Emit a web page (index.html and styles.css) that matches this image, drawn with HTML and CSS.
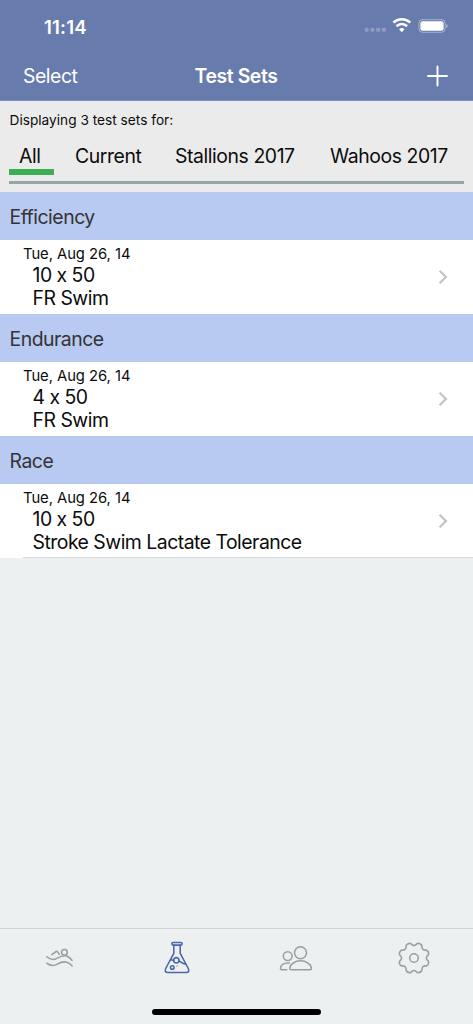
FILE: index.html
```html
<!DOCTYPE html>
<html lang="en">
<head>
<meta charset="utf-8">
<title>Test Sets</title>
<link rel="stylesheet" href="styles.css">
</head>
<body>
<div class="app">
  <header class="top">
    <div class="status">
      <span class="time">11:14</span>
      <svg class="indicators" width="84" height="18" viewBox="0 0 84 18" fill="none">
        <g fill="#fff" opacity=".25"><rect x=".7" y="11.8" width="4" height="4" rx="1.2"/><rect x="6.4" y="11.8" width="4" height="4" rx="1.2"/><rect x="12.2" y="11.8" width="4" height="4" rx="1.2"/><rect x="17.9" y="11.8" width="4" height="4" rx="1.2"/></g>
        <g stroke="#fff" stroke-width="2.6"><path d="M29.4 6.6a12.2 12.2 0 0 1 16.8 0"/><path d="M32.5 10.2a7.6 7.6 0 0 1 10.6 0"/></g>
        <path d="M35.1 13.3a3.9 3.9 0 0 1 5.4 0L37.8 16.2Z" fill="#fff"/>
        <rect x="54.9" y="3.7" width="26.2" height="12.6" rx="3.6" stroke="#fff" stroke-opacity=".42"/>
        <rect x="56.4" y="5.2" width="23.2" height="9.6" rx="2.2" fill="#fff"/>
        <path d="M82.2 8c1.9.8 1.9 3.2 0 4Z" fill="#fff" opacity=".45"/>
      </svg>
    </div>
    <nav class="navbar">
      <span class="select">Select</span>
      <h1 class="title">Test Sets</h1>
      <svg class="plus" width="22" height="22" viewBox="0 0 22 22" stroke="#fff" stroke-width="1.9" stroke-linecap="round"><path d="M11.5 1.5v19M2 11h19"/></svg>
    </nav>
  </header>
  <section class="filter">
    <p class="caption">Displaying 3 test sets for:</p>
    <div class="tabs">
      <span class="tab active">All</span><span class="tab">Current</span><span class="tab stallions">Stallions 2017</span><span class="tab wahoos">Wahoos 2017</span>
    </div>
  </section>
  <main class="list">
    <h2 class="heading">Efficiency</h2>
    <article class="row">
      <div><p class="date">Tue, Aug 26, 14</p><p class="line">10 x 50</p><p class="line">FR Swim</p></div>
      <svg class="chevron" width="10" height="16" viewBox="0 0 10 16"><path d="m1.6 1.8 6.3 6.2-6.3 6.2"/></svg>
    </article>
    <h2 class="heading">Endurance</h2>
    <article class="row">
      <div><p class="date">Tue, Aug 26, 14</p><p class="line">4 x 50</p><p class="line">FR Swim</p></div>
      <svg class="chevron" width="10" height="16" viewBox="0 0 10 16"><path d="m1.6 1.8 6.3 6.2-6.3 6.2"/></svg>
    </article>
    <h2 class="heading">Race</h2>
    <article class="row last">
      <div><p class="date">Tue, Aug 26, 14</p><p class="line">10 x 50</p><p class="line">Stroke Swim Lactate Tolerance</p></div>
      <svg class="chevron" width="10" height="16" viewBox="0 0 10 16"><path d="m1.6 1.8 6.3 6.2-6.3 6.2"/></svg>
    </article>
  </main>
  <footer class="bottom">
    <nav class="tabbar">
      <svg class="icon" width="36" height="36" viewBox="-18 -18 36 36">
        <path d="M-12.2-1.2C-8.7 2-5.2 2.2-1.7.1 2.2-2.2 4.8-3 7.8-1.9 9.8-1.2 11.5.4 13.1 2.4M-12.2 5.2c3.5 2.9 7 3 10.5 1C2.2 4 4.8 3.2 7.8 4.3c2 .7 3.7 1.9 5.3 3.7M-7.2-3.4l4.3-3.1q.9-.5 1.5.4L.3-3.7"/><circle cx="5.4" cy="-5.7" r="2.9"/>
      </svg>
      <svg class="icon selected" width="36" height="36" viewBox="-18 -18 36 36">
        <rect x="-5.2" y="-15.6" width="10.4" height="2.7" rx="1.3"/>
        <path d="M-3.2-12.8v8.2L-11.3 10.5q-1.7 4 2.3 4H9q4 0 2.3-4L3.2-4.6v-8.2M-7 2.4c1.5-.6 2.6-.5 3.8 0M2.2 3c2.4 1.7 4 3.5 7 3.2"/><circle cx="-.7" cy="2.3" r="2.7"/><circle cx="-4.7" cy="9.5" r="1.8"/><circle cx=".3" cy="8.2" r=".1"/>
      </svg>
      <svg class="icon" width="36" height="36" viewBox="-18 -18 36 36">
        <circle cx="4.5" cy="-5.3" r="6"/><circle cx="-8.3" cy="-1.9" r="4.4"/>
        <path d="M-6.2 10.5c0-4.3 5.2-7.7 10.8-7.7s10.8 3.4 10.8 7.7q0 1.2-1.2 1.2H-5q-1.2 0-1.2-1.2ZM-9.3 11.7h-4.9q-1.3 0-1.3-1.2c0-3.3 3.2-5.6 7.1-5.6h1.7"/>
      </svg>
      <svg class="icon" width="36" height="36" viewBox="-18 -18 36 36">
        <path d="M-3.2-14.4Q0-10.4 3.2-14.4Q6-15.4 7.9-12.5Q7.4-7.4 12.5-7.9Q15.4-6 14.4-3.2Q10.4 0 14.4 3.2Q15.4 6 12.5 7.9Q7.4 7.4 7.9 12.5Q6 15.4 3.2 14.4Q0 10.4-3.2 14.4Q-6 15.4-7.9 12.5Q-7.4 7.4-12.5 7.9Q-15.4 6-14.4 3.2Q-10.4 0-14.4-3.2Q-15.4-6-12.5-7.9Q-7.4-7.4-7.9-12.5Q-6-15.4-3.2-14.4Z"/><circle r="4.3"/>
      </svg>
    </nav>
    <div class="home"></div>
  </footer>
</div>
</body>
</html>
```
FILE: styles.css
```css
* { box-sizing: border-box; margin: 0; padding: 0; }
body { font-family: Inter, "Liberation Sans", sans-serif; color: #0c0c0c; background: #ecf0f1; }
svg { display: block; flex: none; }
.app { width: 473px; height: 1024px; display: flex; flex-direction: column; overflow: hidden; white-space: nowrap; }
.top { height: 101px; background: #687bad; color: #fff; border-bottom: 1px solid #8192c0; }
.status { height: 52px; padding: 16px 25px 0 44px; display: flex; justify-content: space-between; }
.time { font-size: 18.6px; line-height: 22px; font-weight: 600; letter-spacing: .2px; }
.navbar { height: 48px; padding: 0 25px 0 23px; display: grid; grid-template-columns: 1fr auto 1fr; align-items: center; }
.select { font-size: 19.4px; letter-spacing: -.45px; }
.title { font-size: 19.4px; font-weight: 600; letter-spacing: -.4px; padding-left: 1px; }
.plus { justify-self: end; }
.filter { height: 91px; padding: 10px 9px 0; background: #ebebeb; }
.caption { font-size: 13.7px; line-height: 18px; padding-left: .5px; }
.tabs { height: 55px; border-bottom: 3px solid #96a5a6; display: flex; padding-top: 14px; font-size: 19.4px; line-height: 26px; letter-spacing: -.42px; }
.tab { height: 32px; width: 100px; margin-left: 21px; }
.tab.active { width: 45px; margin-left: 0; padding-left: 10px; border-bottom: 6px solid #3aaf53; }
.tab.stallions { width: 134px; margin-left: 0; }
.tab.wahoos { width: 118px; }
.heading { height: 48px; padding-left: 9.5px; background: #b8c9f2; color: #333; font-size: 19.4px; font-weight: 400; line-height: 50px; letter-spacing: -.48px; }
.row { height: 74px; padding: 4px 25px 0 23px; display: flex; justify-content: space-between; background: #fff; }
.date { font-size: 14.8px; line-height: 20px; letter-spacing: -.05px; }
.line { padding-left: 9.5px; font-size: 19.4px; line-height: 22.5px; letter-spacing: -.5px; }
.chevron { margin-top: 25px; fill: none; stroke: #c3c3c5; stroke-width: 2.2; }
.row.last { background: linear-gradient(#d8dada, #d8dada) 23px 73px / 450px 1px no-repeat #fff; }
.bottom { height: 96px; margin-top: auto; border-top: 1px solid #d0d4d5; }
.tabbar { height: 80px; padding-top: 11px; display: grid; grid-template-columns: repeat(4, 1fr); justify-items: center; }
.icon { fill: none; stroke: #9d9ea0; stroke-width: 1.55; stroke-linecap: round; stroke-linejoin: round; }
.icon.selected { stroke: #4a65aa; }
.home { width: 169px; height: 6px; margin: 0 auto; border-radius: 3px; background: #000; }
```
